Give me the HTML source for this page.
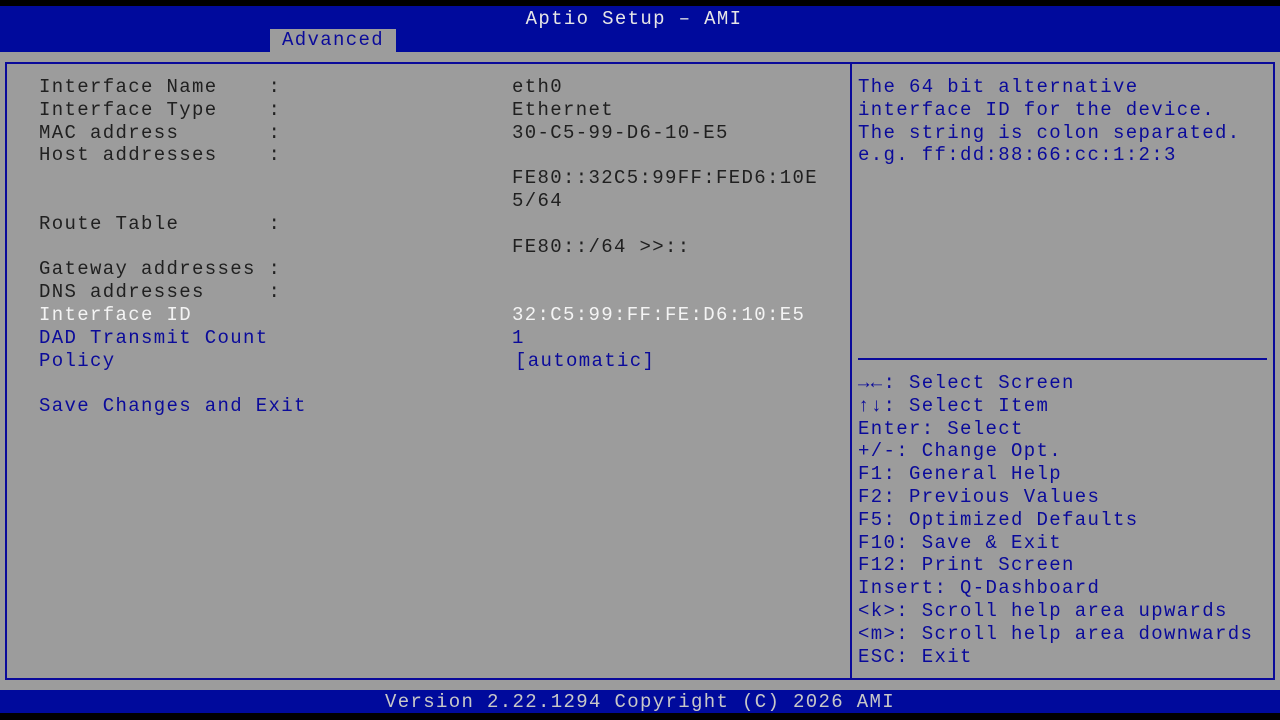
<!DOCTYPE html>
<html><head><meta charset="utf-8"><style>
html,body{margin:0;padding:0;}
body{width:1280px;height:720px;position:relative;background:#9c9c9c;overflow:hidden;font-family:"Liberation Mono","DejaVu Sans Mono",monospace;font-size:19px;letter-spacing:1.35px;}
.abs{position:absolute;}
pre{margin:0;font:inherit;line-height:22.8px;white-space:pre;}
.d{color:#202020}.b{color:#0a0a9a}.w{color:#f4f4f4}.g{color:#d8d8d8}
</style></head><body>
<div class="abs" style="left:0;top:0;width:1280px;height:6px;background:#000"></div>
<div class="abs" style="left:0;top:6px;width:1280px;height:46px;background:#000a9c"></div>
<div class="abs g" style="left:0;top:7px;width:1268px;text-align:center;line-height:24px;color:#e6e6e6">Aptio Setup – AMI</div>
<div class="abs" style="left:270px;top:29px;width:126px;height:23px;background:#9c9c9c;color:#0a0a9a;text-align:center;line-height:23px">Advanced</div>
<div class="abs" style="left:5px;top:62px;width:1266px;height:614px;border:2px solid #0a0a9a"></div>
<div class="abs" style="left:850px;top:62px;width:2px;height:616px;background:#0a0a9a"></div>
<div class="abs" style="left:858px;top:358px;width:409px;height:2px;background:#0a0a9a"></div>
<pre class="abs d" style="left:39px;top:76px">Interface Name    :
Interface Type    :
MAC address       :
Host addresses    :


Route Table       :

Gateway addresses :
DNS addresses     :</pre>
<pre class="abs" style="left:39px;top:304px"><span class="w">Interface ID</span>
<span class="b">DAD Transmit Count</span>
<span class="b">Policy</span>

<span class="b">Save Changes and Exit</span></pre>
<pre class="abs d" style="left:512px;top:76px">eth0
Ethernet
30-C5-99-D6-10-E5

FE80::32C5:99FF:FED6:10E
5/64

FE80::/64 &gt;&gt;::</pre>
<pre class="abs" style="left:512px;top:304px"><span class="w">32:C5:99:FF:FE:D6:10:E5</span>
<span class="b">1</span>
<span class="b" style="padding-left:3px">[automatic]</span></pre>
<pre class="abs b" style="left:858px;top:76px">The 64 bit alternative
interface ID for the device.
The string is colon separated.
e.g. ff:dd:88:66:cc:1:2:3</pre>
<pre class="abs b" style="left:858px;top:372px">→←: Select Screen
↑↓: Select Item
Enter: Select
+/-: Change Opt.
F1: General Help
F2: Previous Values
F5: Optimized Defaults
F10: Save &amp; Exit
F12: Print Screen
Insert: Q-Dashboard
&lt;k&gt;: Scroll help area upwards
&lt;m&gt;: Scroll help area downwards
ESC: Exit</pre>
<div class="abs" style="left:0;top:690px;width:1280px;height:23px;background:#000a9c"></div>
<div class="abs" style="left:0;top:690px;width:1280px;text-align:center;line-height:24px;color:#c8c8c8">Version 2.22.1294 Copyright (C) 2026 AMI</div>
<div class="abs" style="left:0;top:713px;width:1280px;height:7px;background:#000"></div>
</body></html>
